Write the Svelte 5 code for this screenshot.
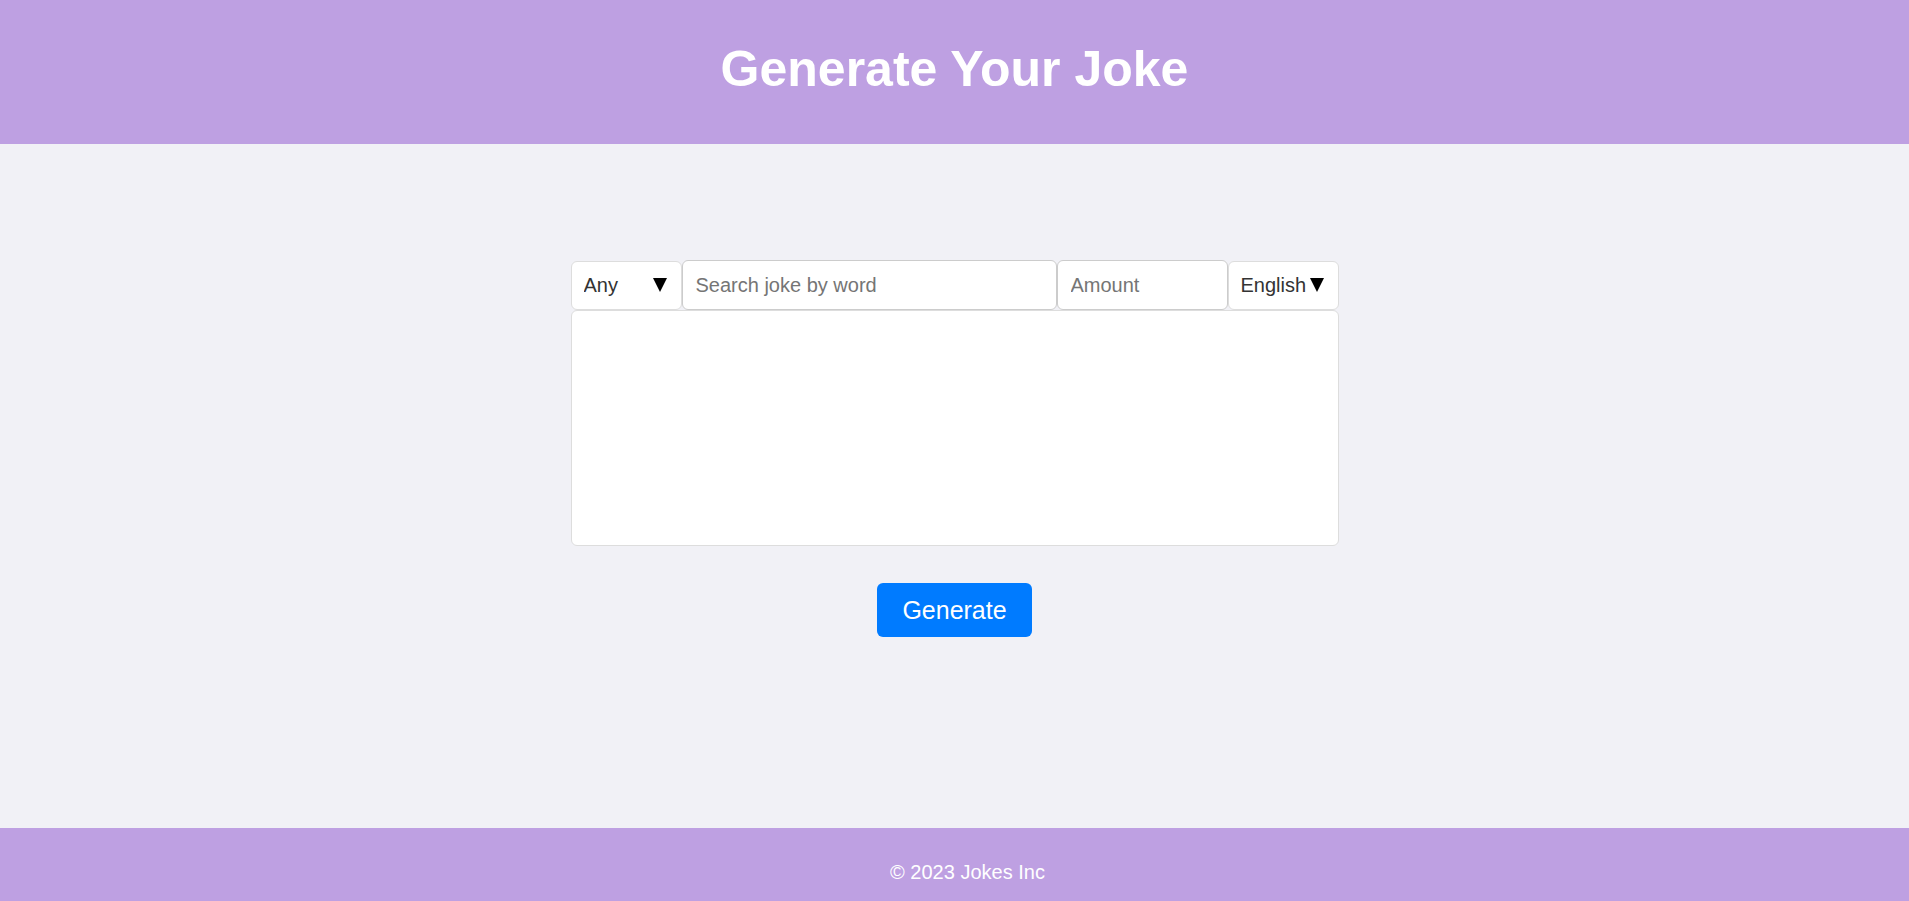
<script>
  let category = $state('Any');
  let language = $state('English');
  let word = $state('');
  let amount = $state('');
</script>

<div class="page">
  <header><h1>Generate Your Joke</h1></header>
  <main>
    <form onsubmit={(e) => e.preventDefault()}>
      <div class="filters">
        <div class="pick">
          <select aria-label="Category" bind:value={category}>
            <option>Any</option>
          </select>
          <span class="arrow" aria-hidden="true"><svg viewBox="0 0 14 14"><path d="M0 0H14L7 14Z" /></svg></span>
        </div>
        <input class="word" type="text" aria-label="Search joke by word" placeholder="Search joke by word" bind:value={word} />
        <input class="amount" type="text" aria-label="Amount" placeholder="Amount" bind:value={amount} />
        <div class="pick">
          <select aria-label="Language" bind:value={language}>
            <option>English</option>
          </select>
          <span class="arrow" aria-hidden="true"><svg viewBox="0 0 14 14"><path d="M0 0H14L7 14Z" /></svg></span>
        </div>
      </div>
      <output class="jokes" aria-label="Jokes"></output>
      <button type="submit">Generate</button>
    </form>
  </main>
  <footer><p>© 2023 Jokes Inc</p></footer>
</div>

<style>
  :global(body) {
    margin: 0;
  }
  .page {
    min-height: 100vh;
    display: flex;
    flex-direction: column;
    background: #f1f1f6;
    font-family: "Liberation Sans", Arial, sans-serif;
    font-size: 20px;
  }
  header,
  footer {
    background: #bea0e2;
    color: #fff;
    text-align: center;
  }
  header {
    padding: 41px 20px 47px;
  }
  h1 {
    margin: 0;
    font-size: 50px;
    line-height: 56px;
  }
  main {
    flex: 1;
    padding: 116px 20px;
  }
  form {
    max-width: 768px;
    margin: 0 auto;
    display: flex;
    flex-direction: column;
    align-items: center;
  }
  .filters {
    display: flex;
    align-items: flex-end;
    width: 100%;
  }
  .pick {
    position: relative;
    flex: 0 0 111px;
  }
  select,
  input {
    display: block;
    box-sizing: border-box;
    width: 100%;
    padding: 0 13px;
    background: #fff;
    border: 1px solid #ddd;
    border-radius: 6px;
    font: inherit;
  }
  select {
    appearance: none;
    height: 49px;
    padding: 0 12px 2px;
    color: #333;
  }
  input {
    height: 50px;
    border-color: #ccc;
  }
  input::placeholder {
    color: #757575;
  }
  .word {
    flex: 1;
    min-width: 0;
  }
  .amount {
    flex: 0 0 171px;
  }
  .arrow {
    position: absolute;
    top: 17px;
    right: 15px;
    width: 14px;
    height: 14px;
    pointer-events: none;
  }
  svg {
    display: block;
  }
  .jokes {
    display: block;
    box-sizing: border-box;
    width: 100%;
    min-height: 236px;
    background: #fff;
    border: 1px solid #ddd;
    border-radius: 6px;
  }
  button {
    margin-top: 37px;
    padding: 12px 25px;
    border: 0;
    border-radius: 6px;
    background: #007bff;
    color: #fff;
    font: inherit;
    font-size: 25px;
    line-height: 30px;
  }
  footer {
    padding: 32px 20px 17px 46px;
  }
  footer p {
    margin: 0;
    line-height: 24px;
  }
</style>
